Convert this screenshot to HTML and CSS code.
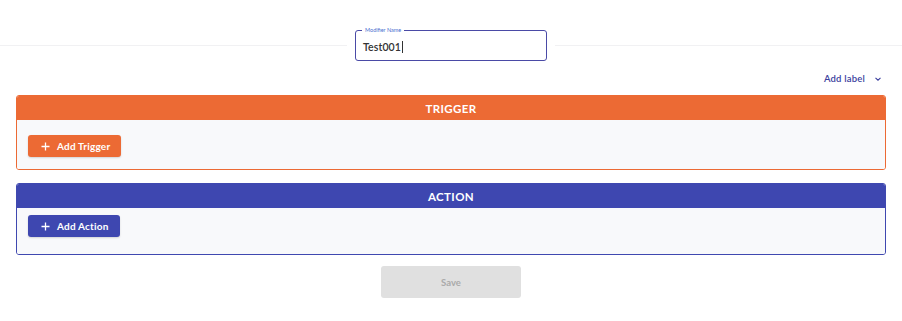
FILE: index.html
```html
<!DOCTYPE html>
<html>
<head>
<meta charset="utf-8">
<link rel="stylesheet" href="styles.css">
</head>
<body>
<div class="page">
  <div class="top">
    <div class="rule"></div>
    <div class="field">
      <span class="field-label">Modifier Name</span>
      <span class="field-value">Test001<span class="caret"></span></span>
    </div>
    <div class="rule"></div>
  </div>
  <div class="label-row">
    <span class="add-label">Add label</span>
    <svg class="chev" width="8" height="6" viewBox="0 0 8 6"><path d="M1.5 1.8 L4 4.2 L6.5 1.8" fill="none" stroke="#3b3f9e" stroke-width="1.1"/></svg>
  </div>
  <div class="card card-trigger">
    <div class="card-head">TRIGGER</div>
    <div class="card-body">
      <button class="btn btn-trigger"><svg class="plus" width="9" height="9" viewBox="0 0 9 9"><path d="M4.5 0.5 V8.5 M0.5 4.5 H8.5" stroke="#fff" stroke-width="1.3"/></svg>Add Trigger</button>
    </div>
  </div>
  <div class="card card-action">
    <div class="card-head">ACTION</div>
    <div class="card-body">
      <button class="btn btn-action"><svg class="plus" width="9" height="9" viewBox="0 0 9 9"><path d="M4.5 0.5 V8.5 M0.5 4.5 H8.5" stroke="#fff" stroke-width="1.3"/></svg>Add Action</button>
    </div>
  </div>
  <div class="save-row">
    <button class="save">Save</button>
  </div>
</div>
</body>
</html>
```
FILE: styles.css
```css
* { box-sizing: border-box; }
html, body { margin: 0; padding: 0; background: #fff; }
body { font-family: Lato, "Noto Sans", sans-serif; color: #333; }
.page { width: 902px; height: 321px; padding: 0 16px 0 16px; }
.top {
  display: flex; align-items: center; margin: 0 -16px;
  padding-top: 30px; gap: 8px;
}
.rule { flex: 1; height: 1px; background: #f1f1f3; margin-top: 0; }
.field {
  position: relative; width: 192px; height: 31px;
  border: 1.5px solid #4a4aa6; border-radius: 3px;
  display: flex; align-items: center; padding-left: 7px; padding-top: 2px;
}
.field-label {
  position: absolute; top: -5px; left: 6px; background: #fff; padding: 0 3px;
  font-size: 5.5px; color: #4a6fd0; line-height: 8px;
}
.field-value { font-size: 10.5px; color: #333; font-weight: 600; display: flex; align-items: center; letter-spacing: 0.1px; }
.caret { display: inline-block; width: 1px; height: 12px; background: #333; margin-left: 1px; }
.label-row {
  display: flex; justify-content: flex-end; align-items: center;
  margin-top: 11px; height: 12px; padding-right: 4px; gap: 9px;
}
.add-label { font-size: 9.5px; color: #3b3f9e; font-weight: 600; letter-spacing: 0.2px; }
.chev { margin-top: 1px; }
.card { border-radius: 3px; overflow: hidden; width: 870px; }
.card-trigger { border: 1px solid #ec6a34; margin-top: 11px; height: 75px; }
.card-action { border: 1px solid #3f48b0; margin-top: 13px; height: 72px; }
.card-head {
  height: 24px; display: flex; align-items: center; justify-content: center;
  color: #fff; font-weight: 700; font-size: 11.5px; letter-spacing: 0.4px;
}
.card-trigger .card-head { background: #ec6a34; }
.card-action .card-head { background: #3e47b0; }
.card-body { background: #f8f9fb; height: 100%; padding-left: 11px; }
.card-trigger .card-body { padding-top: 15px; }
.card-action .card-body { padding-top: 7px; }
.btn {
  border: none; border-radius: 3px; color: #fff; font-family: inherit;
  font-size: 10px; font-weight: 700; height: 22px; display: flex; align-items: center;
  padding: 0 0 0 13px; box-shadow: 0 1px 2px rgba(0,0,0,0.15); letter-spacing: 0.2px;
}
.btn-trigger { background: #ec6a34; width: 93px; }
.btn-action { background: #3e47b0; width: 92px; }
.plus { margin-right: 7px; flex: none; }
.save-row { display: flex; justify-content: center; margin-top: 11px; }
.save {
  width: 140px; height: 32px; border: none; border-radius: 3px; background: #e0e0e0;
  color: #aaa; font-family: inherit; font-size: 9.5px; font-weight: 700;
}
```
